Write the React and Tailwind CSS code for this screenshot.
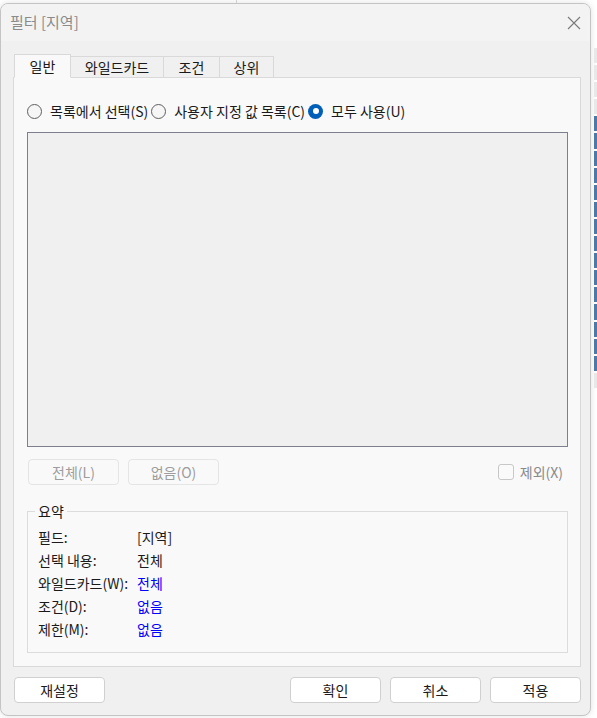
import React from 'react';

const font = { fontFamily: '"Noto Sans CJK KR", "Noto Sans", sans-serif' };

function Radio({ checked, label, className = '' }) {
    return (
        <label className={`flex items-center gap-[8px] ${className}`}>
            {checked ? (
                <span className="w-[15px] h-[15px] rounded-full bg-[#005fb8] flex items-center justify-center">
                    <span className="w-[6px] h-[6px] rounded-full bg-white" />
                </span>
            ) : (
                <span className="w-[15px] h-[15px] rounded-full border border-[#5f5f5f] bg-[#f6f6f6]" />
            )}
            <span>{label}</span>
        </label>
    );
}

function Tab({ label, active, className = '' }) {
    return (
        <div
            className={`flex items-center justify-center border border-[#d9d9d9] ${
                active ? 'h-[24px] bg-[#f9f9f9] border-b-[#f9f9f9] relative z-10' : 'h-[22px] bg-[#f0f0f0] border-l-0'
            } ${className}`}
        >
            {label}
        </div>
    );
}

function SmallButton({ label, disabled, className = '' }) {
    return (
        <button
            className={`h-[26px] w-[91px] rounded-[4px] border flex items-center justify-center ${
                disabled ? 'border-[#e5e5e5] bg-[#f9f9f9] text-[#9d9d9d]' : 'border-[#d0d0d0] bg-white text-[#1a1a1a]'
            } ${className}`}
        >
            {label}
        </button>
    );
}

function SummaryRow({ label, value, blue }) {
    return (
        <div className="flex h-[23px] items-center">
            <span className="w-[99px]">{label}</span>
            <span className={blue ? 'text-[#0000ff]' : 'text-[#1a1a1a]'}>{value}</span>
        </div>
    );
}

export default function App() {
    return (
        <div className="w-[597px] h-[718px] bg-white relative overflow-hidden text-[14px] text-[#1a1a1a]" style={font}>
            {/* background app peeking out on the right */}
            <div className="absolute left-[236px] top-0 w-px h-[3px] bg-[#d0d0d0]" />
            <div className="absolute left-[594px] top-[48px] w-[3px] h-[340px] flex flex-col gap-[2px]">
                {Array.from({ length: 20 }).map((_, i) => (
                    <div key={i} className={`h-[17px] ${i > 3 && i < 19 ? 'bg-[#4e79a7]' : 'bg-[#e8e8e8]'}`} />
                ))}
            </div>

            <div className="mt-[3px] w-[591px] h-[713px] rounded-[8px] border border-[#c4c4c4] bg-[#f0f0f0] flex flex-col overflow-hidden shadow-[0_0_6px_rgba(0,0,0,0.12)]">
                {/* title bar */}
                <div className="h-[37px] bg-[#f3f3f3] flex items-center justify-between pl-[9px] pr-[8px] shrink-0">
                    <span className="text-[15px] text-[#8b8b8b]">필터 [지역]</span>
                    <svg width="16" height="16" viewBox="0 0 16 16">
                        <path d="M2 2 L14 14 M14 2 L2 14" stroke="#7a7a7a" strokeWidth="1.1" />
                    </svg>
                </div>

                {/* body */}
                <div className="flex-1 flex flex-col pl-[12px] pr-[9px] pt-[13px]">
                    <div className="flex items-end h-[24px] pl-px">
                        <Tab label="일반" active className="w-[57px]" />
                        <Tab label="와일드카드" className="w-[93px]" />
                        <Tab label="조건" className="w-[56px]" />
                        <Tab label="상위" className="w-[54px]" />
                    </div>

                    <div className="-mt-px w-[568px] h-[590px] border border-[#d9d9d9] bg-[#f9f9f9] flex flex-col px-[13px]">
                        <div className="flex items-center h-[20px] mt-[23px]">
                            <Radio label="목록에서 선택(S)" />
                            <Radio label="사용자 지정 값 목록(C)" className="ml-[3px]" />
                            <Radio checked label="모두 사용(U)" className="ml-[3px]" />
                        </div>

                        <div className="mt-[11px] h-[315px] w-[541px] border border-[#7d7f8c] bg-[#f0f0f0]" />

                        <div className="mt-[12px] flex items-center">
                            <SmallButton label="전체(L)" disabled className="ml-px" />
                            <SmallButton label="없음(O)" disabled className="ml-[9px]" />
                            <div className="ml-auto mr-[4px] flex items-center gap-[6px] text-[#8a8a8a]">
                                <span className="w-[16px] h-[16px] rounded-[3px] border border-[#c8c8c8] bg-[#fafafa]" />
                                <span>제외(X)</span>
                            </div>
                        </div>

                        <div className="mt-[26px] relative w-[541px] h-[142px] border border-[#dcdcdc] pl-[10px] pt-[14px]">
                            <span className="absolute left-[7px] -top-[10px] px-[3px] bg-[#f9f9f9] leading-[18px]">요약</span>
                            <SummaryRow label="필드:" value="[지역]" />
                            <SummaryRow label="선택 내용:" value="전체" />
                            <SummaryRow label="와일드카드(W):" value="전체" blue />
                            <SummaryRow label="조건(D):" value="없음" blue />
                            <SummaryRow label="제한(M):" value="없음" blue />
                        </div>
                    </div>

                    <div className="mt-[10px] flex items-center pl-px">
                        <SmallButton label="재설정" />
                        <SmallButton label="확인" className="ml-auto" />
                        <SmallButton label="취소" className="ml-[9px]" />
                        <SmallButton label="적용" className="ml-[9px]" />
                    </div>
                </div>
            </div>
        </div>
    );
}
